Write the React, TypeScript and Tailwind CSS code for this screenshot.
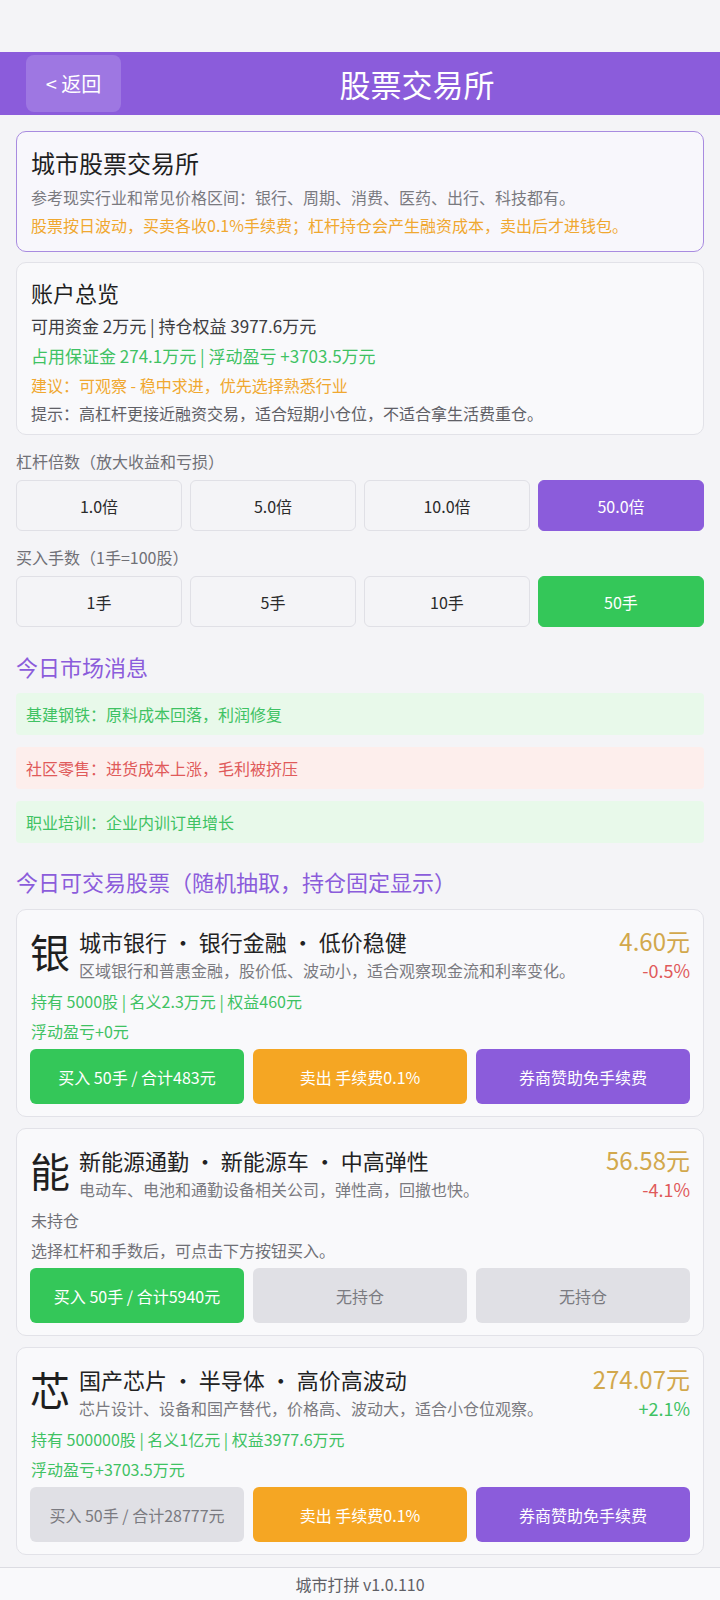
import React from "react";

const F = { fontFamily: '"Noto Sans CJK SC", "Noto Sans", sans-serif' };

type Btn = { label: string; kind: "green" | "orange" | "purple" | "gray" };

type Stock = {
  ch: string;
  title: string;
  desc: string;
  price: string;
  change: string;
  up: boolean;
  lines: { text: string; tone: "green" | "gray" }[];
  buttons: Btn[];
};

const stocks: Stock[] = [
  {
    ch: "银",
    title: "城市银行 · 银行金融 · 低价稳健",
    desc: "区域银行和普惠金融，股价低、波动小，适合观察现金流和利率变化。",
    price: "4.60元",
    change: "-0.5%",
    up: false,
    lines: [
      { text: "持有 5000股 | 名义2.3万元 | 权益460元", tone: "green" },
      { text: "浮动盈亏+0元", tone: "green" },
    ],
    buttons: [
      { label: "买入 50手 / 合计483元", kind: "green" },
      { label: "卖出 手续费0.1%", kind: "orange" },
      { label: "券商赞助免手续费", kind: "purple" },
    ],
  },
  {
    ch: "能",
    title: "新能源通勤 · 新能源车 · 中高弹性",
    desc: "电动车、电池和通勤设备相关公司，弹性高，回撤也快。",
    price: "56.58元",
    change: "-4.1%",
    up: false,
    lines: [
      { text: "未持仓", tone: "gray" },
      { text: "选择杠杆和手数后，可点击下方按钮买入。", tone: "gray" },
    ],
    buttons: [
      { label: "买入 50手 / 合计5940元", kind: "green" },
      { label: "无持仓", kind: "gray" },
      { label: "无持仓", kind: "gray" },
    ],
  },
  {
    ch: "芯",
    title: "国产芯片 · 半导体 · 高价高波动",
    desc: "芯片设计、设备和国产替代，价格高、波动大，适合小仓位观察。",
    price: "274.07元",
    change: "+2.1%",
    up: true,
    lines: [
      { text: "持有 500000股 | 名义1亿元 | 权益3977.6万元", tone: "green" },
      { text: "浮动盈亏+3703.5万元", tone: "green" },
    ],
    buttons: [
      { label: "买入 50手 / 合计28777元", kind: "gray" },
      { label: "卖出 手续费0.1%", kind: "orange" },
      { label: "券商赞助免手续费", kind: "purple" },
    ],
  },
];

function ActionButton({ b }: { b: Btn }) {
  const cls =
    b.kind === "green"
      ? "bg-[#34c759] text-white"
      : b.kind === "orange"
      ? "bg-[#f5a623] text-white"
      : b.kind === "purple"
      ? "bg-[#8b5cdb] text-white"
      : "bg-[#e0e0e5] text-[#7a7a80]";
  return (
    <div
      className={`flex-1 h-[55px] rounded-[6px] flex items-center justify-center text-[16px] ${cls}`}
    >
      {b.label}
    </div>
  );
}

function StockCard({ s }: { s: Stock }) {
  return (
    <div className="border border-[#e2e2e8] rounded-[10px] bg-[#f9f9fb] px-[13px] pt-[16px] pb-[12px]">
      <div className="flex items-start">
        <div className="w-[44px] mt-[5px] text-[40px] leading-[40px] text-[#1f1f1f]">
          {s.ch}
        </div>
        <div className="flex-1 pl-[5px]">
          <div className="text-[22px] leading-[30px] text-[#222]">{s.title}</div>
          <div className="text-[16px] leading-[28px] text-[#7a7a80]">{s.desc}</div>
        </div>
        <div className="flex flex-col items-end">
          <div className="text-[24px] leading-[30px] text-[#d2a84c]">{s.price}</div>
          <div
            className={`text-[18px] leading-[28px] ${
              s.up ? "text-[#3fc263]" : "text-[#e05a5a]"
            }`}
          >
            {s.change}
          </div>
        </div>
      </div>
      <div className="mt-[2px]">
        {s.lines.map((l, i) => (
          <div
            key={i}
            className={`text-[16px] leading-[30px] pl-[1px] ${
              l.tone === "green" ? "text-[#3fc263]" : "text-[#707076]"
            }`}
          >
            {l.text}
          </div>
        ))}
      </div>
      <div className="flex gap-[9px] mt-[3px]">
        {s.buttons.map((b, i) => (
          <ActionButton key={i} b={b} />
        ))}
      </div>
    </div>
  );
}

function Choice({ label, active, color }: { label: string; active?: boolean; color?: "purple" | "green" }) {
  const cls = active
    ? color === "purple"
      ? "bg-[#8b5cdb] border-[#8b5cdb] text-white"
      : "bg-[#34c759] border-[#34c759] text-white"
    : "bg-[#f4f4f7] border-[#e0e0e6] text-[#2a2a2a]";
  return (
    <div
      className={`flex-1 h-[51px] rounded-[6px] border flex items-center justify-center text-[16px] ${cls}`}
    >
      {label}
    </div>
  );
}

export default function App() {
  return (
    <div className="w-[720px] h-[1600px] overflow-hidden bg-[#f4f4f7] flex flex-col" style={F}>
      <div className="h-[52px] shrink-0" />
      <div className="h-[63px] shrink-0 bg-[#8b5cdb] flex items-center px-[26px]">
        <div className="w-[95px] h-[57px] rounded-[8px] bg-[#9e77e2] flex items-center justify-center text-white text-[20px]">
          &lt; 返回
        </div>
        <div className="flex-1 text-center pl-[19px] text-white text-[31px] leading-[40px]">
          股票交易所
        </div>
      </div>

      <div className="flex-1 px-[16px] pt-[16px] flex flex-col">
        <div className="border-[1.5px] border-[#a88be0] rounded-[10px] bg-[#f8f7fc] px-[14px] pt-[15px] pb-[12px]">
          <div className="text-[24px] leading-[32px] text-[#1f1f1f]">城市股票交易所</div>
          <div className="mt-[4px] text-[16px] leading-[28px] text-[#7a7a80]">
            参考现实行业和常见价格区间：银行、周期、消费、医药、出行、科技都有。
          </div>
          <div className="text-[16px] leading-[28px] text-[#f0a830]">
            股票按日波动，买卖各收0.1%手续费；杠杆持仓会产生融资成本，卖出后才进钱包。
          </div>
        </div>

        <div className="mt-[10px] border border-[#e2e2e8] rounded-[10px] bg-[#f9f9fb] px-[14px] pt-[14px] pb-[7px]">
          <div className="text-[22px] leading-[30px] text-[#1f1f1f]">账户总览</div>
          <div className="mt-[4px] text-[17px] leading-[30px] text-[#3c3c40]">
            可用资金 2万元 | 持仓权益 3977.6万元
          </div>
          <div className="text-[17px] leading-[30px] text-[#3fc263]">
            占用保证金 274.1万元 | 浮动盈亏 +3703.5万元
          </div>
          <div className="text-[16px] leading-[28px] text-[#f0a830]">
            建议：可观察 - 稳中求进，优先选择熟悉行业
          </div>
          <div className="text-[16px] leading-[28px] text-[#606066]">
            提示：高杠杆更接近融资交易，适合短期小仓位，不适合拿生活费重仓。
          </div>
        </div>

        <div className="mt-[14px] text-[16px] leading-[24px] text-[#707076]">
          杠杆倍数（放大收益和亏损）
        </div>
        <div className="mt-[7px] flex gap-[8px]">
          <Choice label="1.0倍" />
          <Choice label="5.0倍" />
          <Choice label="10.0倍" />
          <Choice label="50.0倍" active color="purple" />
        </div>

        <div className="mt-[14px] text-[16px] leading-[24px] text-[#707076]">
          买入手数（1手=100股）
        </div>
        <div className="mt-[7px] flex gap-[8px]">
          <Choice label="1手" />
          <Choice label="5手" />
          <Choice label="10手" />
          <Choice label="50手" active color="green" />
        </div>

        <div className="mt-[23px] text-[22px] leading-[32px] text-[#8b5cdb]">今日市场消息</div>
        <div className="mt-[11px] flex flex-col gap-[12px]">
          <div className="h-[42px] rounded-[4px] bg-[#e8f9ea] flex items-center px-[10px] text-[16px] text-[#3fc263]">
            基建钢铁：原料成本回落，利润修复
          </div>
          <div className="h-[42px] rounded-[4px] bg-[#fdeeec] flex items-center px-[10px] text-[16px] text-[#e05a5a]">
            社区零售：进货成本上涨，毛利被挤压
          </div>
          <div className="h-[42px] rounded-[4px] bg-[#e8f9ea] flex items-center px-[10px] text-[16px] text-[#3fc263]">
            职业培训：企业内训订单增长
          </div>
        </div>

        <div className="mt-[22px] text-[22px] leading-[32px] text-[#8b5cdb]">
          今日可交易股票（随机抽取，持仓固定显示）
        </div>
        <div className="mt-[12px] flex flex-col gap-[11px]">
          {stocks.map((s, i) => (
            <StockCard key={i} s={s} />
          ))}
        </div>
      </div>

      <div className="shrink-0 border-t border-[#dcdce2] bg-[#f9f9fb] h-[33px] flex items-center justify-center text-[16px] text-[#606066]">
        城市打拼 v1.0.110
      </div>
    </div>
  );
}
